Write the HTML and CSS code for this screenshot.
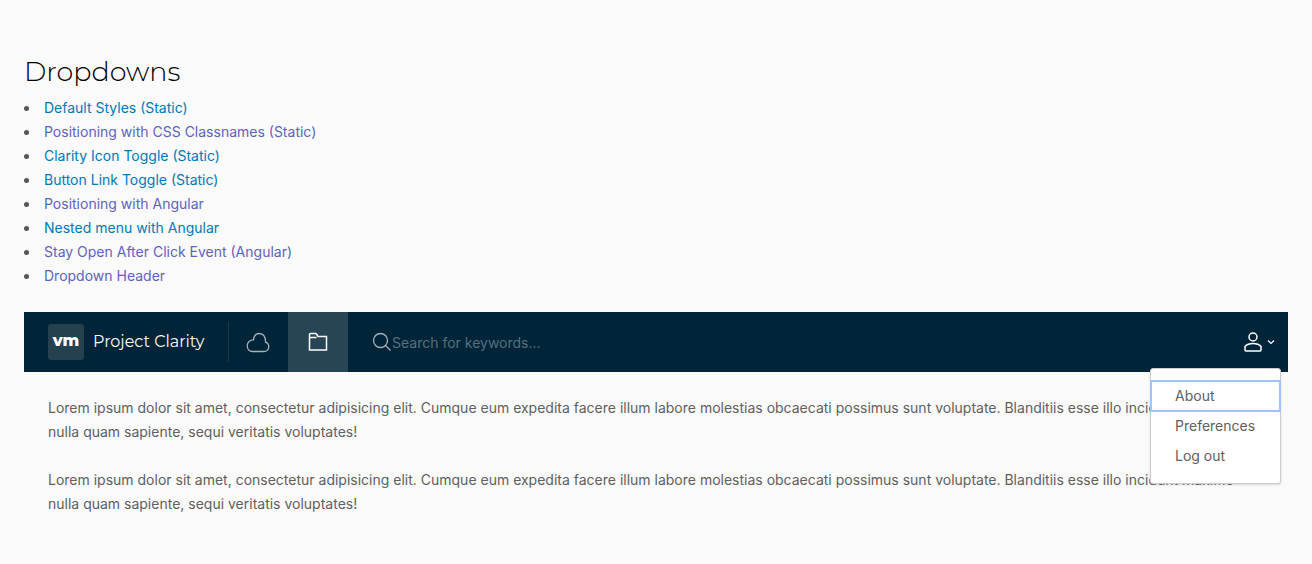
FILE: index.html
```html
<!DOCTYPE html>
<html lang="en">
<head>
<meta charset="utf-8">
<title>Dropdowns</title>
<link rel="stylesheet" href="styles.css">
</head>
<body>
<main class="page">
  <h1 class="title">Dropdowns</h1>
  <ul class="links">
    <li><a href="#default">Default Styles (Static)</a></li>
    <li><a class="seen" href="#positioning">Positioning with CSS Classnames (Static)</a></li>
    <li><a href="#icon">Clarity Icon Toggle (Static)</a></li>
    <li><a href="#button">Button Link Toggle (Static)</a></li>
    <li><a class="seen" href="#angular">Positioning with Angular</a></li>
    <li><a href="#nested">Nested menu with Angular</a></li>
    <li><a class="seen" href="#stay">Stay Open After Click Event (Angular)</a></li>
    <li><a class="seen" href="#header">Dropdown Header</a></li>
  </ul>
  <header class="header">
    <a class="brand" href="#home">
      <span class="logo">vm</span>
      <span class="brand-name">Project Clarity</span>
    </a>
    <nav class="nav">
      <a class="nav-item" href="#cloud" aria-label="Cloud">
        <svg class="icon" viewBox="0 0 24 24"><path d="M6.500 21.500h11.500a4.800 4.800 0 0 0 4.800-4.800c0-2.300-1.300-3.900-3.300-4.600.4-5-2.300-8.600-6-8.600-3.300 0-5.700 2.600-6 6.400-3.500 0-6.300 2.400-6.300 5.900 0 3.500 2.300 5.700 5.300 5.700z"/></svg>
      </a>
      <a class="nav-item active" href="#files" aria-label="Files">
        <svg class="icon folder" viewBox="0 0 24 24"><path d="M3.500 20V4.500q0-1 1-1h5q.8 0 1.200.8l1.300 2.200h8.500V20zM3.500 7.500h7"/></svg>
      </a>
    </nav>
    <label class="search">
      <svg class="search-icon" viewBox="0 0 20 20"><circle cx="8.500" cy="8.500" r="7"/><path d="M13.500 13.500l5 5"/></svg>
      <input class="search-input" type="text" placeholder="Search for keywords..." aria-label="Search for keywords">
    </label>
    <div class="dropdown">
      <button class="toggle" type="button" aria-label="User menu" aria-expanded="true">
        <svg class="icon user" viewBox="0 0 24 24"><circle cx="12" cy="7" r="4"/><path d="M5 21h14q1 0 1-1v-3.500C18 14.200 15 13.500 12 13.500S6 14.200 4 16.500V20q0 1 1 1z"/></svg>
        <svg class="caret" viewBox="0 0 8 8"><path d="M1 2.500l3 3 3-3"/></svg>
      </button>
      <div class="menu">
        <button class="menu-item focused" type="button">About</button>
        <button class="menu-item" type="button">Preferences</button>
        <button class="menu-item" type="button">Log out</button>
      </div>
    </div>
  </header>
  <div class="content">
    <p>Lorem ipsum dolor sit amet, consectetur adipisicing elit. Cumque eum expedita facere illum labore molestias obcaecati possimus sunt voluptate. Blanditiis esse illo incidunt maxime nulla quam sapiente, sequi veritatis voluptates!</p>
    <p>Lorem ipsum dolor sit amet, consectetur adipisicing elit. Cumque eum expedita facere illum labore molestias obcaecati possimus sunt voluptate. Blanditiis esse illo incidunt maxime nulla quam sapiente, sequi veritatis voluptates!</p>
  </div>
</main>
</body>
</html>
```
FILE: styles.css
```css
* { box-sizing: border-box; }
body { margin: 0; background: #fafafa; color: #606060; font: 14px/24px Inter, "Open Sans", sans-serif; }
.page { padding: 48px 24px 0; }
.title { margin: 0; color: #000; font-family: Montserrat, Inter, sans-serif; font-size: 27px; line-height: 48px; font-weight: 300; }
.links { margin: 0 0 24px; padding-left: 0; list-style: none; }
.links li { display: flex; align-items: center; gap: 15px; }
.links li::before { content: ""; width: 5px; height: 5px; border-radius: 50%; background: #565656; }
.links a { color: #0079b8; text-decoration: none; }
.links .seen { color: #5f62bf; }
.header { display: flex; height: 60px; background: #002538; color: #fafafa; }
.brand { display: flex; align-items: center; gap: 9px; width: 204px; padding-left: 24px; color: #fafafa; text-decoration: none; font-family: Montserrat, Inter, sans-serif; font-size: 16px; }
.logo { width: 36px; height: 36px; border-radius: 3px; background: #25404f; color: #fff; font-weight: 800; text-align: center; line-height: 34px; }
.nav { display: flex; align-items: stretch; }
.nav::before { content: ""; width: 1px; margin: 10px -1px 10px 0; background: #1b3b4c; }
.nav-item { display: flex; align-items: center; justify-content: center; width: 60px; color: #a6b2b8; }
.active { background: #274655; color: #fff; }
.icon { width: 24px; height: 24px; fill: none; stroke: currentColor; stroke-width: 1.3; }
.folder { stroke-width: 1.5; }
.user { stroke-width: 1.5; }
.search { display: flex; flex: 1; align-items: center; padding-left: 24px; }
.search-icon { width: 20px; height: 20px; fill: none; stroke: #a6b2b8; stroke-width: 1.3; }
.search-input { flex: 1; border: 0; padding: 2px 0 0; background: transparent; color: #fff; font: inherit; }
.search-input::placeholder { color: #566f7d; }
.dropdown { position: relative; display: flex; }
.toggle { display: flex; align-items: center; gap: 2px; padding: 0 13px; border: 0; background: none; color: #fff; }
.caret { width: 8px; height: 8px; fill: none; stroke: currentColor; stroke-width: 1.2; }
.menu { position: absolute; top: 56px; right: 7px; width: 131px; padding: 12px 0; border: 1px solid #ccc; border-radius: 3px; background: #fff; box-shadow: 0 1px 2px rgba(115, 115, 115, 0.25); }
.menu-item { display: block; width: 100%; height: 30px; padding: 0 24px; border: 0; background: none; color: #606060; font: inherit; text-align: left; }
.focused { outline: 2px solid #a1c2fa; outline-offset: -1px; }
.content { padding: 24px 24px 0; }
.content p { margin: 0 0 24px; }
```
